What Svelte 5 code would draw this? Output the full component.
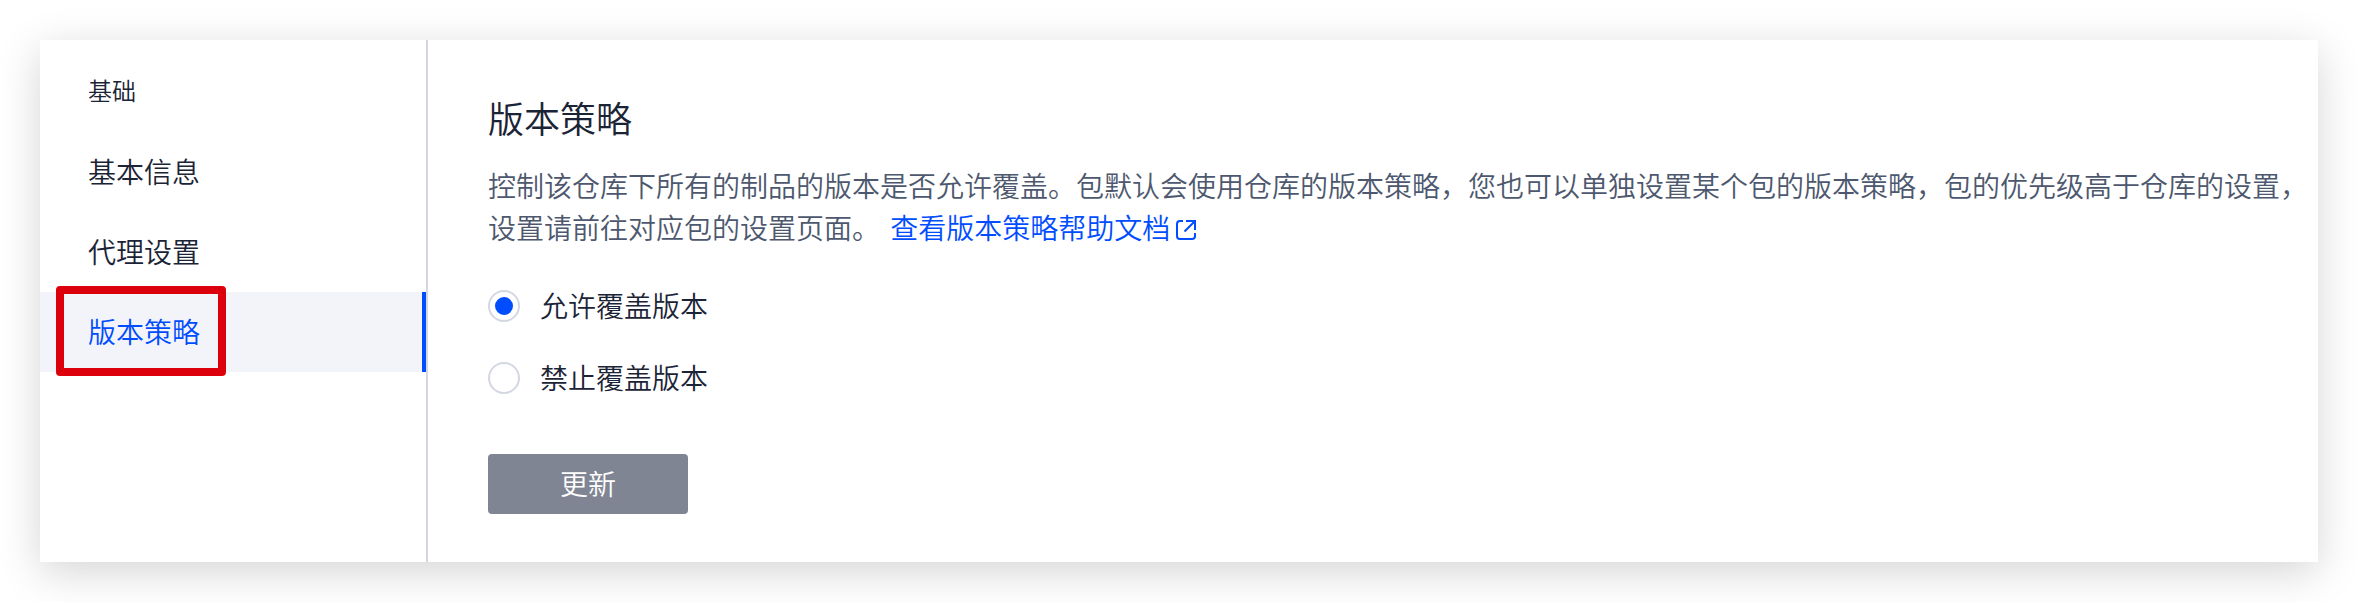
<script>
  const menus = ["基本信息", "代理设置", "版本策略"];
  const policies = [
    { value: "allow", label: "允许覆盖版本" },
    { value: "forbid", label: "禁止覆盖版本" },
  ];

  let current = $state("版本策略");
  let policy = $state("allow");

  function select(e, menu) {
    e.preventDefault();
    current = menu;
  }
</script>

<div class="page">
  <div class="card">
    <nav class="sidebar">
      <h2 class="group">基础</h2>
      {#each menus as menu}
        <a
          href="#{menu}"
          class="item"
          class:active={current === menu}
          onclick={(e) => select(e, menu)}>{menu}</a
        >
      {/each}
    </nav>

    <main class="content">
      <h1 class="title">版本策略</h1>
      <p class="desc">
        控制该仓库下所有的制品的版本是否允许覆盖。包默认会使用仓库的版本策略，您也可以单独设置某个包的版本策略，包的优先级高于仓库的设置，设置请前往对应包的设置页面。
        <a href="#help" class="help"
          >查看版本策略帮助文档<svg class="icon" viewBox="0 0 28 28" aria-hidden="true">
            <path d="M11 5H8Q5 5 5 8V20Q5 23 8 23H20Q23 23 23 20V17" />
            <path d="M14 5H23V14M23 5L12.5 15.5" />
          </svg></a
        >
      </p>

      <form onsubmit={(e) => e.preventDefault()}>
        <div class="options">
          {#each policies as p}
            <label class="option">
              <input type="radio" name="policy" value={p.value} bind:group={policy} />
              {p.label}
            </label>
          {/each}
        </div>
        <button class="submit" type="submit">更新</button>
      </form>
    </main>
  </div>
</div>

<style>
  :global(body) {
    background: #fff;
    color: #1b2436;
    font-family: "Noto Sans CJK SC", sans-serif;
    font-size: 28px;
    font-weight: 350;
    line-height: 42px;
  }

  .page {
    padding: 40px;
  }
  .card {
    display: flex;
    background: #fff;
    box-shadow: 0 10px 40px rgba(0, 0, 0, 0.17);
  }

  /* sidebar */
  .sidebar {
    flex: none;
    width: 386px;
    border-right: 2px solid #d3d7e2;
  }
  .group {
    margin: 0;
    padding: 32px 48px 24px;
    font-size: 24px;
    font-weight: inherit;
    line-height: 36px;
  }
  .item {
    display: block;
    position: relative;
    padding: 0 48px 2px;
    line-height: 78px;
    color: inherit;
    text-decoration: none;
  }
  .item.active {
    background: #f3f4f9;
    color: #004dff;
    box-shadow: inset -4px 0 #004dff;
  }
  /* red marker around the current item */
  .item.active::after {
    content: "";
    position: absolute;
    top: -6px;
    bottom: -4px;
    left: 16px;
    width: 154px;
    border: 8px solid #dc000c;
    border-radius: 4px;
  }

  /* content */
  .content {
    flex: 1;
    min-width: 0;
    padding: 52px 0 48px 60px;
  }
  .title {
    margin: 0 0 22px;
    font-size: 36px;
    font-weight: inherit;
    line-height: 50px;
  }
  .desc {
    margin: 0 0 42px;
    color: #4d586e;
  }
  .help {
    margin-left: 4px;
    color: #004dff;
    text-decoration: none;
  }
  .icon {
    width: 28px;
    height: 28px;
    margin-left: 2px;
    vertical-align: -5px;
    fill: none;
    stroke: currentColor;
    stroke-width: 2;
  }

  .options {
    display: flex;
    flex-direction: column;
    align-items: flex-start;
    gap: 40px;
    margin-bottom: 60px;
  }
  .option {
    display: flex;
    align-items: flex-start;
    gap: 20px;
    height: 32px;
    line-height: 30px;
    cursor: pointer;
  }
  .option input {
    appearance: none;
    box-sizing: border-box;
    width: 32px;
    height: 32px;
    margin: 0;
    border: 2px solid #d3d7e2;
    border-radius: 50%;
    display: grid;
    place-items: center;
    cursor: inherit;
  }
  .option input:checked::before {
    content: "";
    width: 18px;
    height: 18px;
    border-radius: 50%;
    background: #004dff;
  }

  .submit {
    display: block;
    width: 200px;
    height: 60px;
    padding: 0 0 2px;
    border: 0;
    border-radius: 4px;
    background: #7f8592;
    color: #fff;
    font: inherit;
    cursor: pointer;
  }
</style>
